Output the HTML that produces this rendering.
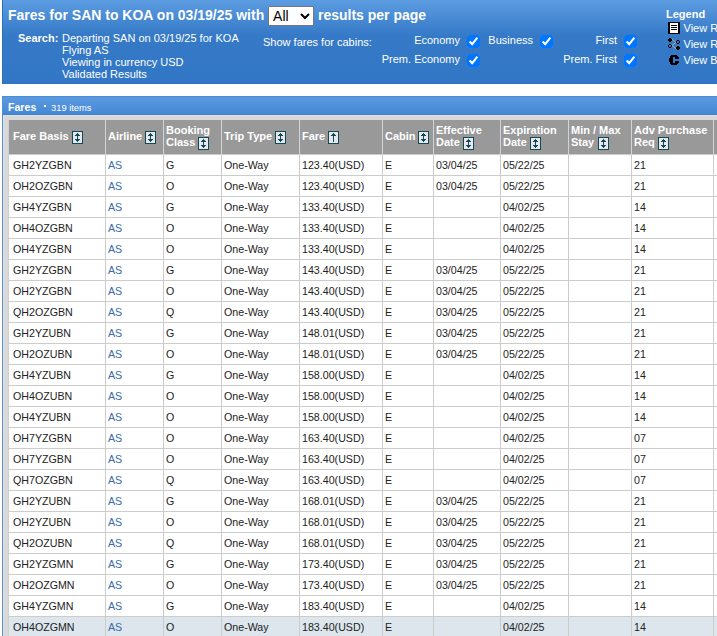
<!DOCTYPE html>
<html><head><meta charset="utf-8">
<style>
html,body{margin:0;padding:0;}
body{width:717px;height:636px;overflow:hidden;position:relative;background:#fff;font-family:"Liberation Sans",sans-serif;font-size:11px;color:#222;}
.abs{position:absolute;white-space:nowrap;}
#hdr{position:absolute;left:2px;top:0;width:760px;height:83px;border-left:1px solid #2d6fbd;border-bottom:1px solid #3172c2;
 background:linear-gradient(to bottom,#5c9ce1 0px,#3579c7 36px,#3277c5 83px);}
#title{position:absolute;left:8px;top:-1px;font-weight:bold;font-size:14px;color:#fff;line-height:32px;white-space:nowrap;}
#title select{font-family:"Liberation Sans",sans-serif;font-size:14px;height:20px;width:46px;vertical-align:baseline;margin:0;position:relative;top:1px;left:0px;}
.w{color:#fff;}
.lbl{position:absolute;color:#fff;white-space:nowrap;line-height:12px;}
.cb{position:absolute;width:13px;height:13px;margin:0;}
#grid{position:absolute;left:2px;top:96px;width:760px;height:600px;border-left:1px solid #5590d4;background:#d9d9d9;}
#gl2{position:absolute;left:0;top:19px;width:1px;height:600px;background:#e2dfdd;}
#bar{position:absolute;left:0;top:0;width:760px;height:19px;box-sizing:border-box;border-top:1px solid #4d8dd8;border-bottom:1px solid #3e80cd;background:linear-gradient(to bottom,#5a9ae0,#4688d4);}
#gl{position:absolute;left:0;top:19px;width:760px;height:1px;background:#e2dfdd;}
#tbl{position:absolute;left:5px;top:24px;border-collapse:collapse;table-layout:fixed;border-left:1px solid #cfcfcf;}
#tbl th{background:#999;color:#fff;font-weight:bold;font-size:11px;text-align:left;vertical-align:middle;height:34px;padding:0 0 0 2px;border-left:1px solid #d4d4d4;line-height:12px;box-sizing:border-box;white-space:nowrap;}
#tbl th:first-child{border-left:none;padding-left:4px;}
#tbl th .si{vertical-align:middle;}
#tbl td{font-size:10.67px;background:#fff;height:21px;box-sizing:border-box;padding:0 0 0 2px;border-left:1px solid #ccc;border-top:1px solid #ccc;line-height:12px;white-space:nowrap;overflow:hidden;}
#tbl td:first-child{border-left:none;padding-left:4px;}
#tbl tr.hov td{background:#dce6ec;}
#tbl td.ln{color:#3b6ba8;}
</style></head><body>
<div id="hdr"></div>
<div id="title" class="abs">Fares for SAN to KOA on 03/19/25 with <select><option>All</option></select> results per page</div>
<div class="lbl" style="left:18px;top:32px;font-weight:bold;">Search:</div>
<div class="lbl" style="left:62px;top:32px;">Departing SAN on 03/19/25 for KOA<br>Flying AS<br>Viewing in currency USD<br>Validated Results</div>
<div class="lbl" style="left:263px;top:36px;">Show fares for cabins:</div>
<div class="lbl" style="left:360px;width:100px;text-align:right;top:34px;">Economy</div>
<div class="lbl" style="left:360px;width:100px;text-align:right;top:53px;">Prem. Economy</div>
<div class="lbl" style="left:433px;width:100px;text-align:right;top:34px;">Business</div>
<div class="lbl" style="left:517px;width:100px;text-align:right;top:34px;">First</div>
<div class="lbl" style="left:517px;width:100px;text-align:right;top:53px;">Prem. First</div>
<input type="checkbox" class="cb" checked style="left:467px;top:35px;">
<input type="checkbox" class="cb" checked style="left:467px;top:54px;">
<input type="checkbox" class="cb" checked style="left:540px;top:35px;">
<input type="checkbox" class="cb" checked style="left:624px;top:35px;">
<input type="checkbox" class="cb" checked style="left:624px;top:54px;">
<div class="lbl" style="left:666px;top:8px;font-weight:bold;">Legend</div>
<svg class="abs" style="left:668px;top:22px" width="12" height="12" shape-rendering="crispEdges"><rect x="0" y="0" width="12" height="12" fill="#000"/><rect x="2" y="1" width="8" height="10" fill="#fff"/><rect x="3" y="3" width="6" height="1" fill="#000"/><rect x="3" y="5" width="6" height="1" fill="#000"/><rect x="3" y="7" width="6" height="1" fill="#000"/></svg>
<svg class="abs" style="left:668px;top:38px" width="12" height="12"><path d="M4 1.2L8 4.4L4 7.4L8 10.6" stroke="#c9b48a" stroke-width="0.8" fill="none"/><g fill="#000" shape-rendering="crispEdges"><rect x="1" y="0" width="2" height="1"/><rect x="0" y="1" width="4" height="2"/><rect x="1" y="3" width="2" height="1"/><rect x="9" y="8" width="2" height="1"/><rect x="8" y="9" width="4" height="2"/><rect x="9" y="11" width="2" height="1"/><rect x="9" y="2" width="2" height="1"/><rect x="8" y="3" width="1" height="2"/><rect x="11" y="3" width="1" height="2"/><rect x="9" y="5" width="2" height="1"/><rect x="1" y="6" width="2" height="1"/><rect x="0" y="7" width="1" height="2"/><rect x="3" y="7" width="1" height="2"/><rect x="1" y="9" width="2" height="1"/></g></svg>
<svg class="abs" style="left:669px;top:55px" width="10" height="10"><g fill="#000" shape-rendering="crispEdges"><rect x="2" y="0" width="6" height="1"/><rect x="1" y="1" width="8" height="1"/><rect x="1" y="2" width="3" height="1"/><rect x="6" y="2" width="4" height="1"/><rect x="0" y="3" width="4" height="1"/><rect x="6" y="3" width="4" height="1"/><rect x="0" y="4" width="4" height="2"/><rect x="0" y="6" width="4" height="1"/><rect x="6" y="6" width="4" height="1"/><rect x="1" y="7" width="3" height="1"/><rect x="6" y="7" width="4" height="1"/><rect x="1" y="8" width="8" height="1"/><rect x="2" y="9" width="6" height="1"/></g></svg>
<div class="lbl" style="left:683.5px;top:22px;">View Rules</div>
<div class="lbl" style="left:683.5px;top:38px;">View Routings</div>
<div class="lbl" style="left:683.5px;top:54px;">View Booking Codes</div>
<div id="grid">
  <div id="bar"></div><div id="gl"></div><div id="gl2"></div>
  <div class="lbl" style="left:5px;top:5px;font-weight:bold;font-size:10.6px;">Fares</div>
  <div style="position:absolute;left:41px;top:9px;width:2px;height:2px;background:#fff;"></div>
  <div class="lbl" style="left:48px;top:6px;font-size:9.35px;">319 items</div>
  <table id="tbl">
  <colgroup><col style="width:97px"><col style="width:58px"><col style="width:58px"><col style="width:78px"><col style="width:83px"><col style="width:51px"><col style="width:67px"><col style="width:68px"><col style="width:63px"><col style="width:82px"><col style="width:47px"></colgroup>
  <thead><tr><th>Fare Basis <svg class="si" width="11" height="13" viewBox="0 0 11 13" shape-rendering="crispEdges"><rect x="0" y="0" width="11" height="13" fill="#0f4b4f"/><rect x="1" y="1" width="9" height="11" fill="#e8e6f0"/><path fill="#0f4b4f" d="M5 2h1v1h1v1h1v1h-3v3h3v1h-1v1h-1v1h-1v-1h-1v-1h-1v-1h3v-3h-3v-1h1v-1h1z"/></svg></th><th>Airline <svg class="si" width="11" height="13" viewBox="0 0 11 13" shape-rendering="crispEdges"><rect x="0" y="0" width="11" height="13" fill="#0f4b4f"/><rect x="1" y="1" width="9" height="11" fill="#e8e6f0"/><path fill="#0f4b4f" d="M5 2h1v1h1v1h1v1h-3v3h3v1h-1v1h-1v1h-1v-1h-1v-1h-1v-1h3v-3h-3v-1h1v-1h1z"/></svg></th><th>Booking<br>Class <svg class="si" width="11" height="13" viewBox="0 0 11 13" shape-rendering="crispEdges"><rect x="0" y="0" width="11" height="13" fill="#0f4b4f"/><rect x="1" y="1" width="9" height="11" fill="#e8e6f0"/><path fill="#0f4b4f" d="M5 2h1v1h1v1h1v1h-3v3h3v1h-1v1h-1v1h-1v-1h-1v-1h-1v-1h3v-3h-3v-1h1v-1h1z"/></svg></th><th>Trip Type <svg class="si" width="11" height="13" viewBox="0 0 11 13" shape-rendering="crispEdges"><rect x="0" y="0" width="11" height="13" fill="#0f4b4f"/><rect x="1" y="1" width="9" height="11" fill="#e8e6f0"/><path fill="#0f4b4f" d="M5 2h1v1h1v1h1v1h-3v3h3v1h-1v1h-1v1h-1v-1h-1v-1h-1v-1h3v-3h-3v-1h1v-1h1z"/></svg></th><th>Fare <svg class="si" width="11" height="13" viewBox="0 0 11 13" shape-rendering="crispEdges"><rect x="0" y="0" width="11" height="13" fill="#0f4b4f"/><rect x="1" y="1" width="9" height="11" fill="#e8e6f0"/><path fill="#0f4b4f" d="M5 2h1v1h1v1h1v1h-2v6h-1v-6h-2v-1h1v-1h1z"/></svg></th><th>Cabin <svg class="si" style="margin-left:-1px" width="11" height="13" viewBox="0 0 11 13" shape-rendering="crispEdges"><rect x="0" y="0" width="11" height="13" fill="#0f4b4f"/><rect x="1" y="1" width="9" height="11" fill="#e8e6f0"/><path fill="#0f4b4f" d="M5 2h1v1h1v1h1v1h-3v3h3v1h-1v1h-1v1h-1v-1h-1v-1h-1v-1h3v-3h-3v-1h1v-1h1z"/></svg></th><th>Effective<br>Date <svg class="si" width="11" height="13" viewBox="0 0 11 13" shape-rendering="crispEdges"><rect x="0" y="0" width="11" height="13" fill="#0f4b4f"/><rect x="1" y="1" width="9" height="11" fill="#e8e6f0"/><path fill="#0f4b4f" d="M5 2h1v1h1v1h1v1h-3v3h3v1h-1v1h-1v1h-1v-1h-1v-1h-1v-1h3v-3h-3v-1h1v-1h1z"/></svg></th><th>Expiration<br>Date <svg class="si" width="11" height="13" viewBox="0 0 11 13" shape-rendering="crispEdges"><rect x="0" y="0" width="11" height="13" fill="#0f4b4f"/><rect x="1" y="1" width="9" height="11" fill="#e8e6f0"/><path fill="#0f4b4f" d="M5 2h1v1h1v1h1v1h-3v3h3v1h-1v1h-1v1h-1v-1h-1v-1h-1v-1h3v-3h-3v-1h1v-1h1z"/></svg></th><th>Min / Max<br>Stay <svg class="si" style="margin-left:1px" width="11" height="13" viewBox="0 0 11 13" shape-rendering="crispEdges"><rect x="0" y="0" width="11" height="13" fill="#0f4b4f"/><rect x="1" y="1" width="9" height="11" fill="#e8e6f0"/><path fill="#0f4b4f" d="M5 2h1v1h1v1h1v1h-3v3h3v1h-1v1h-1v1h-1v-1h-1v-1h-1v-1h3v-3h-3v-1h1v-1h1z"/></svg></th><th>Adv Purchase<br>Req <svg class="si" width="11" height="13" viewBox="0 0 11 13" shape-rendering="crispEdges"><rect x="0" y="0" width="11" height="13" fill="#0f4b4f"/><rect x="1" y="1" width="9" height="11" fill="#e8e6f0"/><path fill="#0f4b4f" d="M5 2h1v1h1v1h1v1h-3v3h3v1h-1v1h-1v1h-1v-1h-1v-1h-1v-1h3v-3h-3v-1h1v-1h1z"/></svg></th><th></th></tr></thead>
  <tbody><tr><td>GH2YZGBN</td><td class="ln">AS</td><td>G</td><td>One-Way</td><td>123.40(USD)</td><td>E</td><td>03/04/25</td><td>05/22/25</td><td></td><td>21</td><td></td></tr>
<tr><td>OH2OZGBN</td><td class="ln">AS</td><td>O</td><td>One-Way</td><td>123.40(USD)</td><td>E</td><td>03/04/25</td><td>05/22/25</td><td></td><td>21</td><td></td></tr>
<tr><td>GH4YZGBN</td><td class="ln">AS</td><td>G</td><td>One-Way</td><td>133.40(USD)</td><td>E</td><td></td><td>04/02/25</td><td></td><td>14</td><td></td></tr>
<tr><td>OH4OZGBN</td><td class="ln">AS</td><td>O</td><td>One-Way</td><td>133.40(USD)</td><td>E</td><td></td><td>04/02/25</td><td></td><td>14</td><td></td></tr>
<tr><td>OH4YZGBN</td><td class="ln">AS</td><td>O</td><td>One-Way</td><td>133.40(USD)</td><td>E</td><td></td><td>04/02/25</td><td></td><td>14</td><td></td></tr>
<tr><td>GH2YZGBN</td><td class="ln">AS</td><td>G</td><td>One-Way</td><td>143.40(USD)</td><td>E</td><td>03/04/25</td><td>05/22/25</td><td></td><td>21</td><td></td></tr>
<tr><td>OH2YZGBN</td><td class="ln">AS</td><td>O</td><td>One-Way</td><td>143.40(USD)</td><td>E</td><td>03/04/25</td><td>05/22/25</td><td></td><td>21</td><td></td></tr>
<tr><td>QH2OZGBN</td><td class="ln">AS</td><td>Q</td><td>One-Way</td><td>143.40(USD)</td><td>E</td><td>03/04/25</td><td>05/22/25</td><td></td><td>21</td><td></td></tr>
<tr><td>GH2YZUBN</td><td class="ln">AS</td><td>G</td><td>One-Way</td><td>148.01(USD)</td><td>E</td><td>03/04/25</td><td>05/22/25</td><td></td><td>21</td><td></td></tr>
<tr><td>OH2OZUBN</td><td class="ln">AS</td><td>O</td><td>One-Way</td><td>148.01(USD)</td><td>E</td><td>03/04/25</td><td>05/22/25</td><td></td><td>21</td><td></td></tr>
<tr><td>GH4YZUBN</td><td class="ln">AS</td><td>G</td><td>One-Way</td><td>158.00(USD)</td><td>E</td><td></td><td>04/02/25</td><td></td><td>14</td><td></td></tr>
<tr><td>OH4OZUBN</td><td class="ln">AS</td><td>O</td><td>One-Way</td><td>158.00(USD)</td><td>E</td><td></td><td>04/02/25</td><td></td><td>14</td><td></td></tr>
<tr><td>OH4YZUBN</td><td class="ln">AS</td><td>O</td><td>One-Way</td><td>158.00(USD)</td><td>E</td><td></td><td>04/02/25</td><td></td><td>14</td><td></td></tr>
<tr><td>OH7YZGBN</td><td class="ln">AS</td><td>O</td><td>One-Way</td><td>163.40(USD)</td><td>E</td><td></td><td>04/02/25</td><td></td><td>07</td><td></td></tr>
<tr><td>OH7YZGBN</td><td class="ln">AS</td><td>O</td><td>One-Way</td><td>163.40(USD)</td><td>E</td><td></td><td>04/02/25</td><td></td><td>07</td><td></td></tr>
<tr><td>QH7OZGBN</td><td class="ln">AS</td><td>Q</td><td>One-Way</td><td>163.40(USD)</td><td>E</td><td></td><td>04/02/25</td><td></td><td>07</td><td></td></tr>
<tr><td>GH2YZUBN</td><td class="ln">AS</td><td>G</td><td>One-Way</td><td>168.01(USD)</td><td>E</td><td>03/04/25</td><td>05/22/25</td><td></td><td>21</td><td></td></tr>
<tr><td>OH2YZUBN</td><td class="ln">AS</td><td>O</td><td>One-Way</td><td>168.01(USD)</td><td>E</td><td>03/04/25</td><td>05/22/25</td><td></td><td>21</td><td></td></tr>
<tr><td>QH2OZUBN</td><td class="ln">AS</td><td>Q</td><td>One-Way</td><td>168.01(USD)</td><td>E</td><td>03/04/25</td><td>05/22/25</td><td></td><td>21</td><td></td></tr>
<tr><td>GH2YZGMN</td><td class="ln">AS</td><td>G</td><td>One-Way</td><td>173.40(USD)</td><td>E</td><td>03/04/25</td><td>05/22/25</td><td></td><td>21</td><td></td></tr>
<tr><td>OH2OZGMN</td><td class="ln">AS</td><td>O</td><td>One-Way</td><td>173.40(USD)</td><td>E</td><td>03/04/25</td><td>05/22/25</td><td></td><td>21</td><td></td></tr>
<tr><td>GH4YZGMN</td><td class="ln">AS</td><td>G</td><td>One-Way</td><td>183.40(USD)</td><td>E</td><td></td><td>04/02/25</td><td></td><td>14</td><td></td></tr>
<tr class="hov"><td>OH4OZGMN</td><td class="ln">AS</td><td>O</td><td>One-Way</td><td>183.40(USD)</td><td>E</td><td></td><td>04/02/25</td><td></td><td>14</td><td></td></tr>
</tbody>
  </table>
</div>
</body></html>
